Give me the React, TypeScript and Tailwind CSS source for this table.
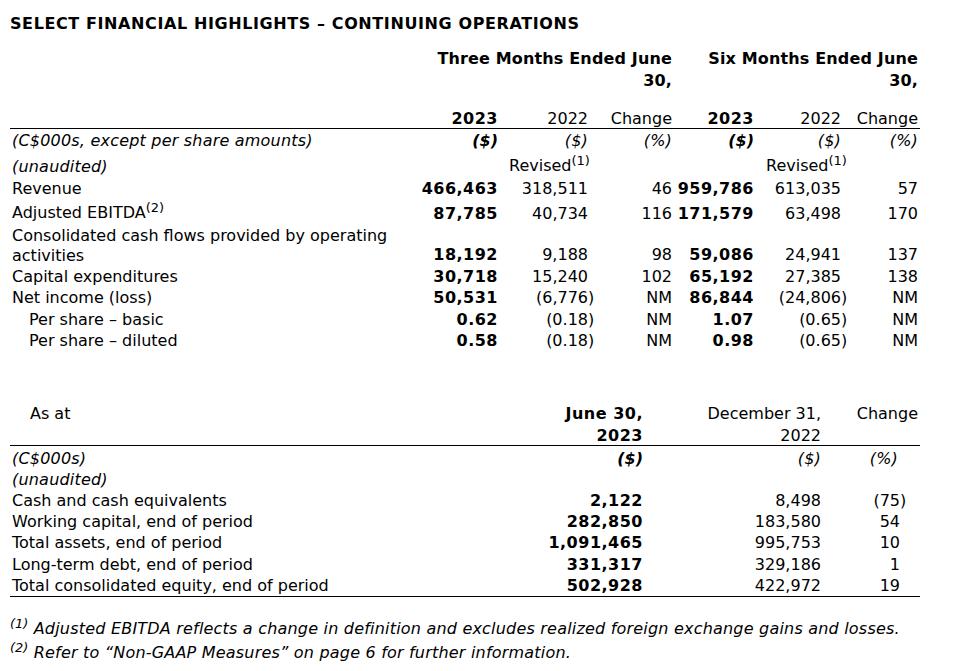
import React from "react";

const F = { fontFamily: '"DejaVu Sans", Verdana, sans-serif' };

function Neg({ v }: { v: string }) {
  return (
    <>
      {v}
      <span className="inline-block w-0 text-left">)</span>
    </>
  );
}

const Sup = ({ n }: { n: string }) => (
  <span className="text-[13px] relative -top-[6px] tracking-normal">({n})</span>
);

type R = {
  label: React.ReactNode;
  a: string;
  b: React.ReactNode;
  c: string;
  d: string;
  e: React.ReactNode;
  f: string;
  h: string;
  indent?: boolean;
  lh?: string;
};

const rows: R[] = [
  { label: "Revenue", a: "466,463", b: "318,511", c: "46", d: "959,786", e: "613,035", f: "57", h: "h-[22.5px]" },
  { label: <>Adjusted EBITDA<Sup n="2" /></>, a: "87,785", b: "40,734", c: "116", d: "171,579", e: "63,498", f: "170", h: "h-[25px]" },
  { label: <>Consolidated cash flows provided by operating<br />activities</>, a: "18,192", b: "9,188", c: "98", d: "59,086", e: "24,941", f: "137", h: "h-[40.5px]", lh: "leading-[19.5px]" },
  { label: "Capital expenditures", a: "30,718", b: "15,240", c: "102", d: "65,192", e: "27,385", f: "138", h: "h-[22.3px]" },
  { label: "Net income (loss)", a: "50,531", b: <Neg v="(6,776" />, c: "NM", d: "86,844", e: <Neg v="(24,806" />, f: "NM", h: "h-[21.3px]" },
  { label: "Per share – basic", a: "0.62", b: <Neg v="(0.18" />, c: "NM", d: "1.07", e: <Neg v="(0.65" />, f: "NM", h: "h-[21.3px]", indent: true },
  { label: "Per share – diluted", a: "0.58", b: <Neg v="(0.18" />, c: "NM", d: "0.98", e: <Neg v="(0.65" />, f: "NM", h: "h-[21.3px]", indent: true },
];

const cols1 = "grid grid-cols-[410px_78px_90px_84px_82px_87px_79px] *:relative *:top-[1px]";

type R2 = { label: string; a: string; b: string; c: React.ReactNode; h: string };
const rows2: R2[] = [
  { label: "Cash and cash equivalents", a: "2,122", b: "8,498", c: <Neg v="(75" />, h: "h-[23.3px]" },
  { label: "Working capital, end of period", a: "282,850", b: "183,580", c: "54", h: "h-[21.3px]" },
  { label: "Total assets, end of period", a: "1,091,465", b: "995,753", c: "10", h: "h-[21.3px]" },
  { label: "Long-term debt, end of period", a: "331,317", b: "329,186", c: "1", h: "h-[21.3px]" },
  { label: "Total consolidated equity, end of period", a: "502,928", b: "422,972", c: "19", h: "h-[21.3px]" },
];

const cols2 = "grid grid-cols-[450px_183px_178px_99px] *:relative *:top-[1px]";

const B = "font-bold tracking-[0.5px]";
const I = "italic tracking-[0.2px]";

export default function App() {
  return (
    <div className="w-[964px] h-[671px] bg-white text-black text-[16px] leading-[21.3px] overflow-hidden" style={F}>
      <div className="pl-[10px] pt-[12px]">
        <div className="font-bold tracking-[0.6px] h-[21px] leading-[21px] relative top-[1px]">SELECT FINANCIAL HIGHLIGHTS – CONTINUING OPERATIONS</div>

        {/* Table 1 */}
        <div className="w-[910px] mt-[14px]">
          <div className={cols1 + " leading-[22px]"}>
            <div />
            <div className={"col-span-3 text-right font-bold tracking-[0.15px]"}>Three Months Ended June<br />30,</div>
            <div className={"col-span-3 text-right font-bold tracking-[0.15px] pr-[2px]"}>Six Months Ended June<br />30,</div>
          </div>
          <div className={cols1 + " mt-[16px] h-[22px] items-end border-b border-black"}>
            <div />
            <div className={"text-right " + B}>2023</div>
            <div className="text-right">2022</div>
            <div className="text-right">Change</div>
            <div className={"text-right " + B}>2023</div>
            <div className="text-right">2022</div>
            <div className="text-right pr-[2px]">Change</div>
          </div>
          <div className={cols1 + " h-[21.5px] items-end"}>
            <div className={I + " pl-[2px] whitespace-nowrap"}>(C$000s, except per share amounts)</div>
            <div className={"text-right italic font-bold"}>($)</div>
            <div className={"text-right " + I}>($)</div>
            <div className={"text-right " + I}>(%)</div>
            <div className={"text-right italic font-bold"}>($)</div>
            <div className={"text-right " + I}>($)</div>
            <div className={"text-right pr-[2px] " + I}>(%)</div>
          </div>
          <div className={cols1 + " h-[25.5px] items-end"}>
            <div className={I + " pl-[2px]"}>(unaudited)</div>
            <div />
            <div className="pl-[11px] whitespace-nowrap">Revised<Sup n="1" /></div>
            <div />
            <div />
            <div className="pl-[12px] whitespace-nowrap">Revised<Sup n="1" /></div>
            <div />
          </div>
          {rows.map((r, i) => (
            <div key={i} className={cols1 + " items-end " + r.h}>
              <div className={(r.indent ? "pl-[19px] " : "pl-[2px] ") + (r.lh ?? "") + " whitespace-nowrap"}>{r.label}</div>
              <div className={"text-right " + B}>{r.a}</div>
              <div className="text-right">{r.b}</div>
              <div className="text-right">{r.c}</div>
              <div className={"text-right " + B}>{r.d}</div>
              <div className="text-right">{r.e}</div>
              <div className="text-right pr-[2px]">{r.f}</div>
            </div>
          ))}
        </div>

        {/* Table 2 */}
        <div className="w-[910px] mt-[50px]">
          <div className={cols2 + " leading-[22px] border-b border-black pb-[1px] *:top-[3px]"}>
            <div className="pl-[20px]">As at</div>
            <div className={"text-right " + B}>June 30,<br />2023</div>
            <div className="text-right">December 31,<br />2022</div>
            <div className="text-right pr-[2px]">Change</div>
          </div>
          <div className={cols2 + " h-[22px] items-end"}>
            <div className={I + " pl-[2px]"}>(C$000s)</div>
            <div className="text-right italic font-bold">($)</div>
            <div className={"text-right " + I}>($)</div>
            <div className={"text-right pr-[22px] " + I}>(%)</div>
          </div>
          <div className={cols2 + " h-[18.5px] items-end"}>
            <div className={I + " pl-[2px]"}>(unaudited)</div>
          </div>
          <div className="border-b border-black pb-[1px]">
            {rows2.map((r, i) => (
              <div key={i} className={cols2 + " items-end " + r.h}>
                <div className="pl-[2px] whitespace-nowrap">{r.label}</div>
                <div className={"text-right " + B}>{r.a}</div>
                <div className="text-right">{r.b}</div>
                <div className="text-right pr-[20px]">{r.c}</div>
              </div>
            ))}
          </div>
        </div>

        {/* Footnotes */}
        <div className={"mt-[20px] leading-[23px] " + I}>
          <div><Sup n="1" /> Adjusted EBITDA reflects a change in definition and excludes realized foreign exchange gains and losses.</div>
          <div><Sup n="2" /> Refer to “Non-GAAP Measures” on page 6 for further information.</div>
        </div>
      </div>
    </div>
  );
}
